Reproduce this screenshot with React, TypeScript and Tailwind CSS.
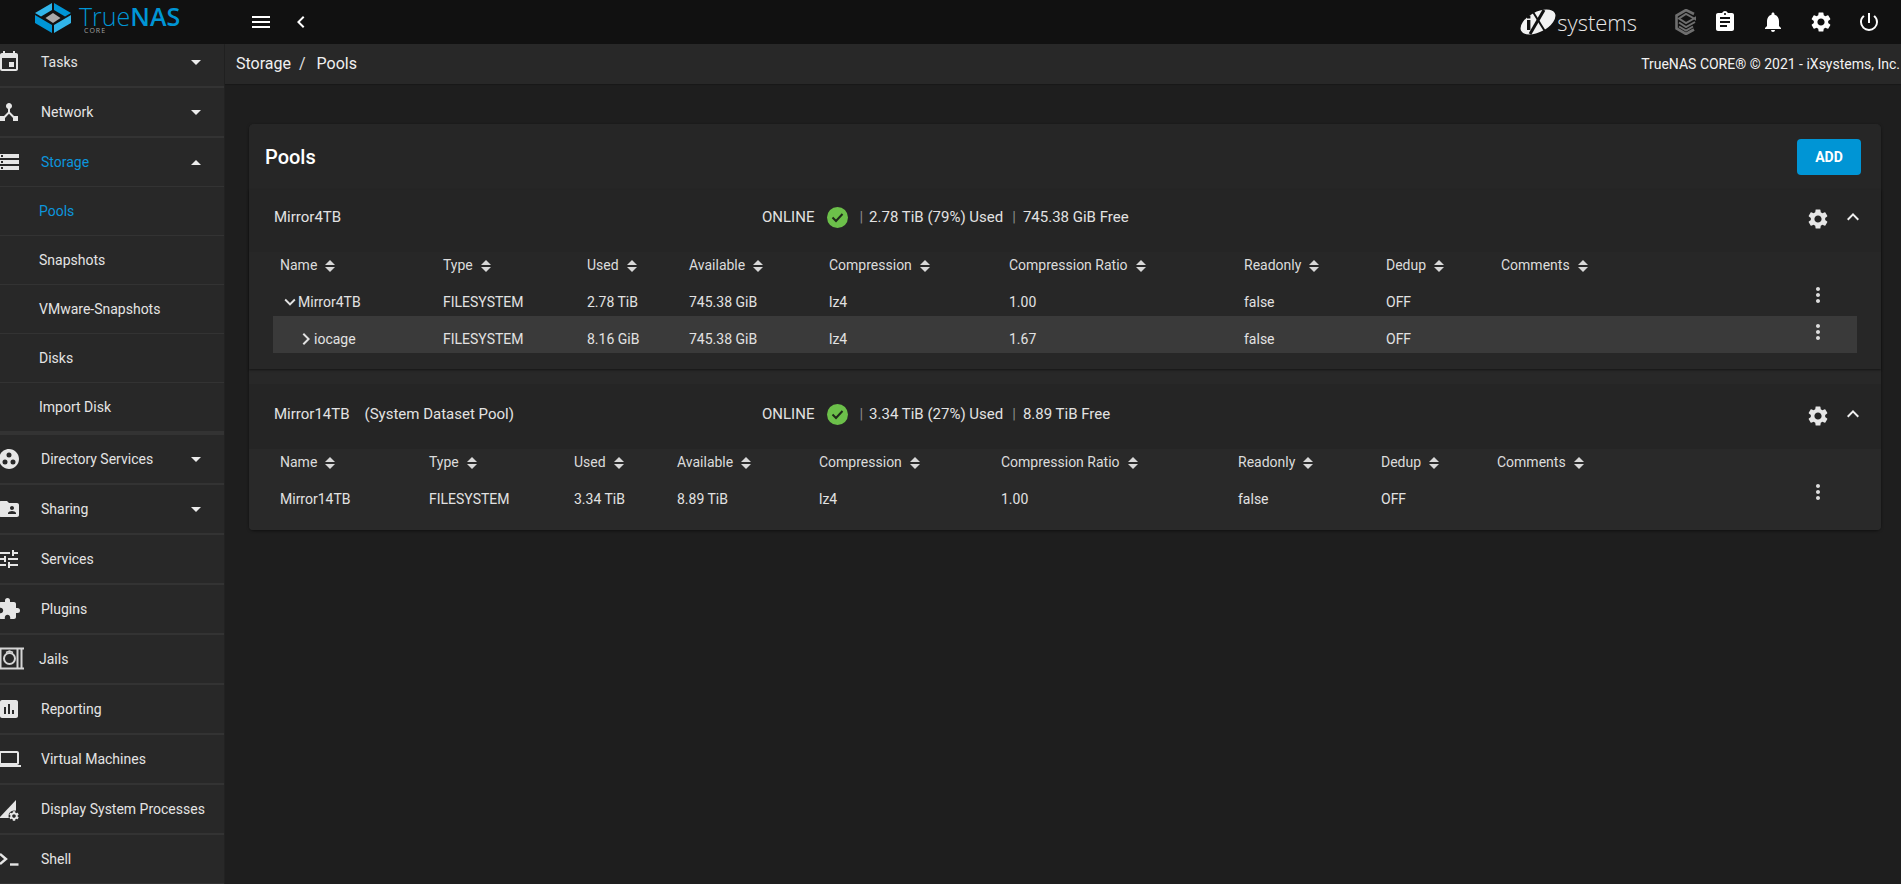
import { ReactNode } from 'react';
import {
  MdAssessment,
  MdAssignment,
  MdChevronLeft,
  MdChevronRight,
  MdDeviceHub,
  MdEvent,
  MdExpandLess,
  MdExpandMore,
  MdExtension,
  MdFolderShared,
  MdGroupWork,
  MdLaptop,
  MdMenu,
  MdMoreVert,
  MdNotifications,
  MdPowerSettingsNew,
  MdSettings,
  MdStorage,
  MdTune,
} from 'react-icons/md';

function Caret({ up }: { up?: boolean }) {
  return (
    <svg width="10" height="5" viewBox="0 0 10 5" className="ml-auto mr-[23px] shrink-0" fill="#ececec">
      {up ? <polygon points="5,0 10,5 0,5" /> : <polygon points="0,0 10,0 5,5" />}
    </svg>
  );
}

function SortIcon() {
  return (
    <svg width="10" height="12" viewBox="0 0 10 12" className="ml-2 shrink-0" fill="#d8d8d8">
      <polygon points="5,0 10,5 0,5" />
      <polygon points="0,7 10,7 5,12" />
    </svg>
  );
}

function JailsIcon() {
  return (
    <svg width="27" height="24" viewBox="0 0 27 24" fill="none" stroke="#d5d5d5">
      <path d="M3 1.500h24M3 21.500h24" strokeWidth="2" />
      <path d="M20.500 2v19M24.500 2v19M3.500 2v19" strokeWidth="2" />
      <circle cx="12.500" cy="11.500" r="5.500" strokeWidth="2" />
      <path d="M9 5.500l3.500-1.500 3.500 1.500" strokeWidth="1.500" />
    </svg>
  );
}

function ProcessesIcon() {
  return (
    <svg width="24" height="24" viewBox="0 0 24 24" fill="#e6e6e6">
      <polygon points="2,21 19,3 19,13 14,21" />
      <g transform="translate(11,13) scale(0.5)">
        <circle cx="12" cy="12" r="11" fill="#282828" />
        <path d="M19.14 12.94c.04-.3.06-.61.06-.94 0-.32-.02-.64-.07-.94l2.03-1.58c.18-.14.23-.41.12-.61l-1.92-3.32c-.12-.22-.37-.29-.59-.22l-2.39.96c-.5-.38-1.03-.7-1.62-.94l-.36-2.54c-.04-.24-.24-.41-.48-.41h-3.84c-.24 0-.43.17-.47.41l-.36 2.54c-.59.24-1.13.57-1.62.94l-2.39-.96c-.22-.08-.47 0-.59.22L2.74 8.87c-.12.21-.08.47.12.61l2.03 1.58c-.05.3-.09.63-.09.94s.02.64.07.94l-2.03 1.58c-.18.14-.23.41-.12.61l1.92 3.32c.12.22.37.29.59.22l2.39-.96c.5.38 1.03.7 1.62.94l.36 2.54c.05.24.24.41.48.41h3.84c.24 0 .44-.17.47-.41l.36-2.54c.59-.24 1.13-.56 1.62-.94l2.39.96c.22.08.47 0 .59-.22l1.92-3.32c.12-.22.07-.47-.12-.61l-2.01-1.58zM12 15.600c-1.980 0-3.600-1.620-3.600-3.600s1.620-3.600 3.600-3.600 3.600 1.620 3.600 3.600-1.620 3.600-3.600 3.600z" />
      </g>
    </svg>
  );
}

function ShellIcon() {
  return (
    <svg width="24" height="24" viewBox="0 0 24 24" fill="none" stroke="#e6e6e6" strokeWidth="2.400">
      <path d="M3 7l6 5-6 5" />
      <path d="M13 17.500h8.500" />
    </svg>
  );
}

function TrueNasMark() {
  return (
    <svg width="36" height="30" viewBox="0 0 36 30" className="shrink-0">
      <polygon points="17,0 0,10 6,13.500 17,7" fill="#31b5ea" />
      <polygon points="19,0 36,10 30,13.500 19,7" fill="#0095d5" />
      <polygon points="0,12 17,22 17,30 0,20" fill="#0095d5" />
      <polygon points="36,12 19,22 19,30 36,20" fill="#31b5ea" />
      <polygon points="18,10 25.500,15 18,20 10.500,15" fill="#a9a9a9" />
    </svg>
  );
}

function IxMark() {
  return (
    <svg width="36" height="26" viewBox="0 0 36 26" className="shrink-0">
      <ellipse cx="18" cy="13" rx="19" ry="10" transform="rotate(-28 18 13)" fill="#f2f2f2" />
      <path d="M13 3L26 24" stroke="#111111" strokeWidth="2" />
      <path d="M24 1L10 25" stroke="#111111" strokeWidth="3" />
      <rect x="7" y="11" width="3.400" height="10" fill="#111111" />
      <rect x="7" y="6.500" width="3.400" height="3" fill="#111111" />
    </svg>
  );
}

function StackMark() {
  return (
    <svg width="24" height="26" viewBox="0 0 24 26" fill="none" stroke="#6f6f6f" strokeWidth="2.600" className="shrink-0">
      <path d="M20 5L12 1 2.500 6.500v13L12 25l8-4.500" />
      <path d="M21 10l-9-5-7 4.500 7 4.500 9-5zM5 13.500l7 4.500 9-5M5 17.500l7 4 7-4" strokeWidth="2" />
    </svg>
  );
}

function TopBar() {
  return (
    <header className="flex h-[44px] shrink-0 items-center bg-[#111111] text-white">
      <div className="mb-[6px] flex w-[249px] shrink-0 items-start pl-[35px]">
        <TrueNasMark />
        <div className="ml-[8px] flex flex-col [font-family:'Open_Sans',sans-serif] text-[#0095d5]">
          <div className="flex h-[24px] pt-[1px] text-[25px] leading-[24px]">
            <span className="font-light">True</span>
            <span className="font-semibold">NAS</span>
          </div>
          <span className="ml-[5px] text-[7px] leading-[8px] tracking-[1px] text-[#a0a0a0]">CORE</span>
        </div>
      </div>
      <MdMenu size={24} />
      <MdChevronLeft size={24} className="ml-[16px]" />

      <div className="ml-auto flex items-center pr-[20px]">
        <IxMark />
        <span className="ml-[1px] [font-family:'Open_Sans',sans-serif] text-[22px] font-light leading-none text-[#e8e8e8]">
          systems
        </span>
        <div className="ml-[37px]">
          <StackMark />
        </div>
        <MdAssignment size={24} className="ml-[15px]" />
        <MdNotifications size={24} className="ml-[24px]" />
        <MdSettings size={24} className="ml-[24px]" />
        <MdPowerSettingsNew size={24} className="ml-[24px]" />
      </div>
    </header>
  );
}

type NavItem = { label: string; icon: ReactNode; caret?: boolean; narrow?: boolean };

const lowerNav: NavItem[] = [
  { label: 'Directory Services', icon: <MdGroupWork size={24} color="#e6e6e6" />, caret: true },
  { label: 'Sharing', icon: <MdFolderShared size={24} color="#e6e6e6" />, caret: true },
  { label: 'Services', icon: <MdTune size={24} color="#e6e6e6" /> },
  { label: 'Plugins', icon: <MdExtension size={24} color="#e6e6e6" /> },
  { label: 'Jails', icon: <JailsIcon />, narrow: true },
  { label: 'Reporting', icon: <MdAssessment size={24} color="#e6e6e6" /> },
  { label: 'Virtual Machines', icon: <MdLaptop size={24} color="#e6e6e6" /> },
  { label: 'Display System Processes', icon: <ProcessesIcon /> },
  { label: 'Shell', icon: <ShellIcon /> },
];

function NavRow({ item, active, up }: { item: NavItem; active?: boolean; up?: boolean }) {
  return (
    <div
      className={`flex shrink-0 items-center border-[#333333] ${
        active ? 'h-[49px] border-b' : 'h-[50px] border-b-2'
      }`}
    >
      <div className={`-ml-[3px] shrink-0 ${item.narrow ? 'w-[42px]' : 'w-[44px]'}`}>{item.icon}</div>
      <span className={active ? 'text-[#0d95dc]' : 'text-[#e4e4e4]'}>{item.label}</span>
      {item.caret && <Caret up={up} />}
    </div>
  );
}

function SubRow({ label, active, last }: { label: string; active?: boolean; last?: boolean }) {
  return (
    <div
      className={`flex shrink-0 items-center pl-[39px] ${
        last ? 'h-[52px] border-b-4 border-[#333333]' : 'h-[49px] border-b border-[#333333]'
      } ${active ? 'text-[#0d95dc]' : 'text-[#e4e4e4]'}`}
    >
      {label}
    </div>
  );
}

function Sidebar() {
  return (
    <aside className="w-[225px] shrink-0 overflow-hidden border-r border-[#222222] bg-[#282828] text-[14px]">
      <div className="-mt-[6px] flex flex-col">
        <NavRow item={{ label: 'Tasks', icon: <MdEvent size={24} color="#e6e6e6" />, caret: true }} />
        <NavRow item={{ label: 'Network', icon: <MdDeviceHub size={24} color="#e6e6e6" />, caret: true }} />
        <NavRow item={{ label: 'Storage', icon: <MdStorage size={24} color="#e6e6e6" />, caret: true }} active up />
        <SubRow label="Pools" active />
        <SubRow label="Snapshots" />
        <SubRow label="VMware-Snapshots" />
        <SubRow label="Disks" />
        <SubRow label="Import Disk" last />
        {lowerNav.map((item) => (
          <NavRow key={item.label} item={item} />
        ))}
      </div>
    </aside>
  );
}

function HeaderCell({ label }: { label: string }) {
  return (
    <div className="flex h-[27px] items-center text-[#dcdcdc]">
      {label}
      <SortIcon />
    </div>
  );
}

function Cell({ children }: { children?: ReactNode }) {
  return <div className="pt-[14px] leading-[18px] text-[#e2e2e2]">{children}</div>;
}

const columns = ['Type', 'Used', 'Available', 'Compression', 'Compression Ratio', 'Readonly', 'Dedup', 'Comments'];

function RowCells({ values }: { values: string[] }) {
  return (
    <>
      {values.map((v, i) => (
        <Cell key={i}>{v}</Cell>
      ))}
      <div className="mt-1">
        <MdMoreVert size={24} color="#dddddd" />
      </div>
    </>
  );
}

function PoolHead({ name, note, used, free }: { name: string; note?: string; used: string; free: string }) {
  return (
    <div className="flex items-center pl-[25px] pr-[16px] text-[15px] text-[#e2e2e2]">
      <div className="flex w-[488px] shrink-0">
        <span>{name}</span>
        {note && <span className="ml-[15px]">{note}</span>}
      </div>
      <span>ONLINE</span>
      <svg width="21" height="21" viewBox="0 0 21 21" className="ml-[13px] shrink-0">
        <circle cx="10.500" cy="10.500" r="10.500" fill="#6cc04a" />
        <path d="M5.500 10.500l3.500 3.500 6.500-7" fill="none" stroke="#1f2a1a" strokeWidth="2" />
      </svg>
      <span className="ml-[11px] text-[#8a8a8a]">|</span>
      <span className="ml-[6px]">{used}</span>
      <span className="ml-[9px] text-[#8a8a8a]">|</span>
      <span className="ml-[7px]">{free}</span>
      <MdSettings size={24} color="#e6e6e6" className="ml-auto mt-[4px]" />
      <MdExpandLess size={24} color="#f0f0f0" className="ml-[11px]" />
    </div>
  );
}

function Pool1() {
  const grid = 'grid grid-cols-[170px_144px_102px_140px_180px_235px_142px_115px_305px_24px_1fr] items-start';
  return (
    <section className="bg-[#252525] shadow-[0_1px_2px_rgba(0,0,0,0.5)]">
      <div className="flex h-[62px] items-center pb-[8px]">
        <div className="w-full">
          <PoolHead name="Mirror4TB" used="2.78 TiB (79%) Used" free="745.38 GiB Free" />
        </div>
      </div>
      <div className="h-[117px] bg-[#272727] px-[24px]">
        <div className={grid}>
          <div className="pl-[7px]">
            <HeaderCell label="Name" />
          </div>
          {columns.map((c) => (
            <HeaderCell key={c} label={c} />
          ))}
        </div>
        <div className={`${grid} h-[37px]`}>
          <div className="flex items-center pl-[6px] pt-[14px] leading-[18px] text-[#e2e2e2]">
            <MdExpandMore size={22} className="-my-[2px] -mr-[3px] shrink-0" />
            Mirror4TB
          </div>
          <RowCells values={['FILESYSTEM', '2.78 TiB', '745.38 GiB', 'lz4', '1.00', 'false', 'OFF', '']} />
        </div>
        <div className={`${grid} h-[37px] bg-[#3a3a3a]`}>
          <div className="flex items-center pl-[21px] pt-[14px] leading-[18px] text-[#e2e2e2]">
            <MdChevronRight size={24} className="-my-[3px] -mr-[4px] shrink-0" />
            iocage
          </div>
          <RowCells values={['FILESYSTEM', '8.16 GiB', '745.38 GiB', 'lz4', '1.67', 'false', 'OFF', '']} />
        </div>
      </div>
    </section>
  );
}

function Pool2() {
  const grid = 'grid grid-cols-[156px_145px_103px_142px_182px_237px_143px_116px_309px_24px_1fr] items-start';
  return (
    <section className="mt-[15px] rounded-b bg-[#252525]">
      <div className="flex h-[65px] items-center pb-[5px]">
        <div className="w-full">
          <PoolHead
            name="Mirror14TB"
            note="(System Dataset Pool)"
            used="3.34 TiB (27%) Used"
            free="8.89 TiB Free"
          />
        </div>
      </div>
      <div className="h-[81px] rounded-b bg-[#292929] px-[24px]">
        <div className={grid}>
          <div className="pl-[7px]">
            <HeaderCell label="Name" />
          </div>
          {columns.map((c) => (
            <HeaderCell key={c} label={c} />
          ))}
        </div>
        <div className={`${grid} h-[37px]`}>
          <div className="pl-[7px]">
            <Cell>Mirror14TB</Cell>
          </div>
          <RowCells values={['FILESYSTEM', '3.34 TiB', '8.89 TiB', 'lz4', '1.00', 'false', 'OFF', '']} />
        </div>
      </div>
    </section>
  );
}

export default function App() {
  return (
    <div className="flex h-screen flex-col overflow-hidden bg-[#1e1e1e] [font-family:Roboto,sans-serif] text-[14px] text-white">
      <TopBar />
      <div className="flex min-h-0 flex-1">
        <Sidebar />
        <main className="min-w-0 flex-1">
          <div className="flex h-[40px] items-center bg-[#282828] pl-[11px] pr-[1px] shadow-[0_1px_1px_rgba(0,0,0,0.2)]">
            <span className="text-[16px] text-[#f0f0f0]">Storage</span>
            <span className="ml-[8px] text-[16px] text-[#e0e0e0]">/</span>
            <span className="ml-[11px] text-[16px] text-[#f0f0f0]">Pools</span>
            <span className="ml-auto text-[#f2f2f2]">TrueNAS CORE® © 2021 - iXsystems, Inc.</span>
          </div>

          <div className="ml-[24px] mr-[20px] mt-[40px] rounded-[5px] bg-[#282828] shadow-[0_1px_3px_rgba(0,0,0,0.5)]">
            <div className="flex h-[66px] items-center justify-between rounded-t-[5px] bg-[#262626] pl-[16px] pr-[20px]">
              <h1 className="text-[20px] font-medium text-white">Pools</h1>
              <button className="h-[36px] w-[64px] rounded bg-[#0095d5] text-[14px] font-bold text-white">ADD</button>
            </div>
            <Pool1 />
            <Pool2 />
          </div>
        </main>
      </div>
    </div>
  );
}
